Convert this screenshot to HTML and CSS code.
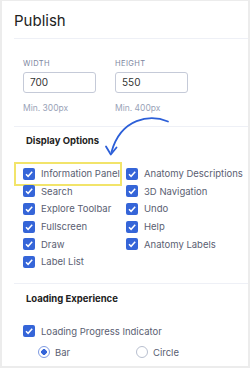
FILE: index.html
```html
<!DOCTYPE html>
<html lang="en">
<head>
<meta charset="utf-8"/>
<title>Publish</title>
<link rel="stylesheet" href="styles.css">
</head>
<body>
<div class="panel">
  <div class="header">Publish</div>

  <div class="section size">
    <div class="field">
      <label class="caps">Width</label>
      <div class="input">700</div>
      <div class="hint">Min. 300px</div>
    </div>
    <div class="field">
      <label class="caps">Height</label>
      <div class="input">550</div>
      <div class="hint">Min. 400px</div>
    </div>
  </div>

  <div class="section options">
    <h3>Display Options</h3>
    <div class="grid">
      <div class="col">
        <div class="check highlight"><span class="box"><svg viewBox="0 0 12 12"><path d="M3 6.2 5.1 8.3 9.2 3.8"/></svg></span>Information Panel</div>
        <div class="check"><span class="box"><svg viewBox="0 0 12 12"><path d="M3 6.2 5.1 8.3 9.2 3.8"/></svg></span>Search</div>
        <div class="check"><span class="box"><svg viewBox="0 0 12 12"><path d="M3 6.2 5.1 8.3 9.2 3.8"/></svg></span>Explore Toolbar</div>
        <div class="check"><span class="box"><svg viewBox="0 0 12 12"><path d="M3 6.2 5.1 8.3 9.2 3.8"/></svg></span>Fullscreen</div>
        <div class="check"><span class="box"><svg viewBox="0 0 12 12"><path d="M3 6.2 5.1 8.3 9.2 3.8"/></svg></span>Draw</div>
        <div class="check"><span class="box"><svg viewBox="0 0 12 12"><path d="M3 6.2 5.1 8.3 9.2 3.8"/></svg></span>Label List</div>
      </div>
      <div class="col">
        <div class="check"><span class="box"><svg viewBox="0 0 12 12"><path d="M3 6.2 5.1 8.3 9.2 3.8"/></svg></span>Anatomy Descriptions</div>
        <div class="check"><span class="box"><svg viewBox="0 0 12 12"><path d="M3 6.2 5.1 8.3 9.2 3.8"/></svg></span>3D Navigation</div>
        <div class="check"><span class="box"><svg viewBox="0 0 12 12"><path d="M3 6.2 5.1 8.3 9.2 3.8"/></svg></span>Undo</div>
        <div class="check"><span class="box"><svg viewBox="0 0 12 12"><path d="M3 6.2 5.1 8.3 9.2 3.8"/></svg></span>Help</div>
        <div class="check"><span class="box"><svg viewBox="0 0 12 12"><path d="M3 6.2 5.1 8.3 9.2 3.8"/></svg></span>Anatomy Labels</div>
      </div>
    </div>
  </div>

  <div class="section loading">
    <h3>Loading Experience</h3>
    <div class="check"><span class="box"><svg viewBox="0 0 12 12"><path d="M3 6.2 5.1 8.3 9.2 3.8"/></svg></span>Loading Progress Indicator</div>
    <div class="radios">
      <div class="radio on"><span class="dot"></span>Bar</div>
      <div class="radio"><span class="dot"></span>Circle</div>
    </div>
  </div>

  <svg class="arrow" width="250" height="368" viewBox="0 0 250 368">
    <path d="M168 121.5 C150 114 121 118 111.5 152"/>
    <path d="M106 146.5 L110.8 154.5 L116.5 147.5"/>
  </svg>
</div>
</body>
</html>
```

FILE: styles.css
```css
body {
  margin: 0;
  background: #ececec;
  font-family: Inter, "Liberation Sans", sans-serif;
  color: #222;
}
.panel {
  position: relative;
  margin: 1px 2px 0 2px;
  height: 365px;
  background: white;
  overflow: hidden;
}
.header {
  margin-left: 12px;
  padding: 10px 0 7px;
  font-size: 15px;
  line-height: 20px;
  border-bottom: 1px solid #eef0f6;
}
.section {
  margin-left: 12px;
  padding-left: 9px;
  border-bottom: 1px solid #eef0f6;
}
.size {
  display: flex;
  gap: 19px;
  padding-top: 20px;
  padding-bottom: 13px;
}
.caps {
  display: block;
  font-size: 7.5px;
  line-height: 10px;
  letter-spacing: 0.4px;
  text-transform: uppercase;
  color: #7c86a0;
}
.input {
  box-sizing: border-box;
  width: 73px;
  height: 21px;
  margin-top: 3px;
  padding-left: 6px;
  border: 1px solid #c5cad8;
  border-radius: 3px;
  font-size: 10px;
  line-height: 19px;
  color: #333;
}
.hint {
  margin-top: 10px;
  font-size: 8.5px;
  line-height: 10px;
  color: #9aa3b8;
}
h3 {
  margin: 0 0 0 3px;
  font-size: 9.5px;
  line-height: 12px;
  font-weight: 700;
  color: #222;
}
.options {
  padding-top: 8px;
  padding-bottom: 12px;
}
.grid {
  display: flex;
  margin-top: 18px;
}
.col:first-child {
  width: 103px;
}
.check {
  position: relative;
  display: flex;
  align-items: center;
  height: 17.6px;
  font-size: 9.5px;
  color: #5a6072;
  white-space: nowrap;
}
.box {
  flex: none;
  width: 12px;
  height: 12px;
  margin-right: 6px;
  border-radius: 2px;
  background: #3565d8;
}
.box svg {
  display: block;
  width: 12px;
  height: 12px;
  fill: none;
  stroke: white;
  stroke-width: 1.5;
}
.highlight::before {
  content: "";
  position: absolute;
  left: -9px;
  top: -3px;
  width: 104px;
  height: 20px;
  border: 2px solid #f2e46a;
}
.loading {
  padding-top: 9px;
  border-bottom: none;
}
.loading .check {
  margin-top: 18px;
}
.radios {
  display: flex;
  margin-top: 3.5px;
  padding-left: 15px;
}
.radio {
  display: flex;
  align-items: center;
  height: 17.6px;
  width: 98px;
  font-size: 9.5px;
  color: #5a6072;
}
.dot {
  box-sizing: border-box;
  width: 12px;
  height: 12px;
  margin-right: 5px;
  border: 1px solid #b8bfcf;
  border-radius: 50%;
}
.radio.on .dot {
  border-color: #7f9be2;
  background: radial-gradient(circle, #3565d8 0 2.6px, white 3px);
}
.arrow {
  position: absolute;
  left: -2px;
  top: -1px;
  fill: none;
  stroke: #2c5fd8;
  stroke-width: 1.8;
  stroke-linecap: round;
  stroke-linejoin: round;
}
```
